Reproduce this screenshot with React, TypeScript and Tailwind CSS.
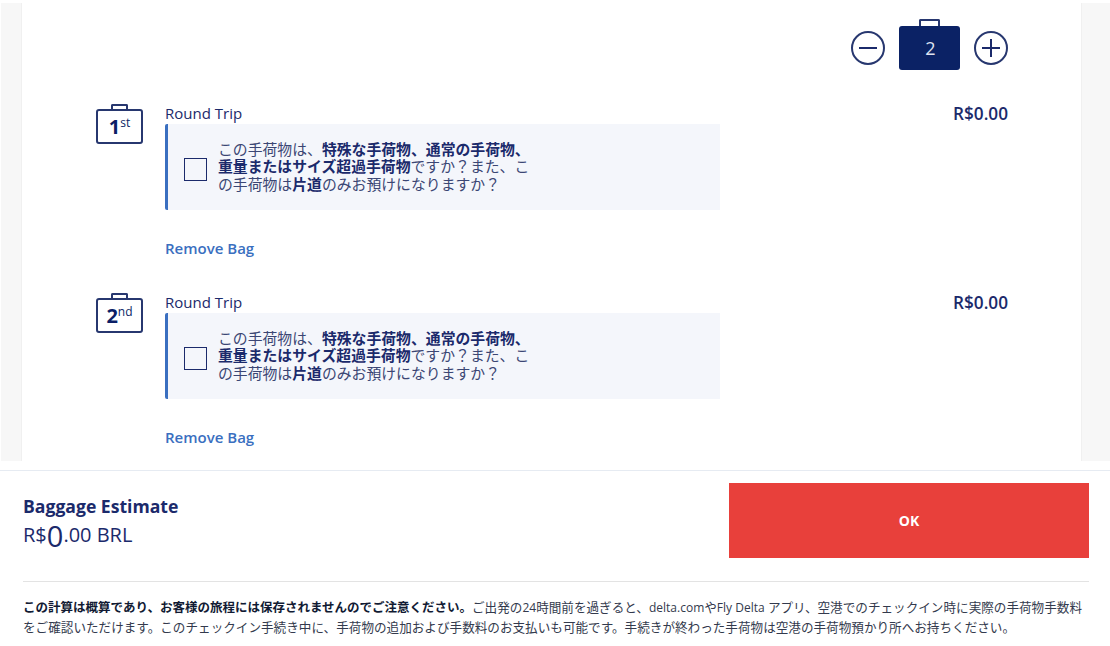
const sans = "font-['Open_Sans','Noto_Sans_CJK_JP',sans-serif]";

const BagOutline = ({ rank, suffix }: { rank: string; suffix: string }) => (
  <div className="relative mt-[6px] flex h-[35px] w-[47px] items-center justify-center rounded-[3px] border-2 border-[#27376f] text-[#0b1f66]">
    <div className="absolute top-[-7px] left-[13px] h-[6px] w-[17px] rounded-t-[2px] border-2 border-b-0 border-[#27376f]" />
    <span className="text-[20px] leading-none font-bold">{rank}</span>
    <span className="mb-[7px] text-[12px] leading-none">{suffix}</span>
  </div>
);

const BagRow = ({ rank, suffix }: { rank: string; suffix: string }) => (
  <div className="flex h-[189px] pr-[73px] pl-[74px]">
    <BagOutline rank={rank} suffix={suffix} />
    <div className="ml-[22px] flex-1">
      <div className="flex h-[21px] items-center justify-between text-[15px] text-[#1b2a6b]">
        <span>Round Trip</span>
        <span className="text-[17.2px] font-semibold">R$0.00</span>
      </div>
      <div className="flex h-[86px] w-[555px] items-center rounded-l-[2px] border-l-[3px] border-[#3a6fc0] bg-[#f4f6fb] pl-[16px]">
        <div className="mt-[4px] h-[23px] w-[23px] shrink-0 border-[1.5px] border-[#1b2a6b]" />
        <p className="ml-[11px] w-[330px] text-[14.85px] leading-[17.5px] text-[#3b4674]">
          この手荷物は、<b className="text-[#1b2a6b]">特殊な手荷物、通常の手荷物、<br />重量またはサイズ超過手荷物</b>ですか？また、こ<br />の手荷物は<b className="text-[#1b2a6b]">片道</b>のみお預けになりますか？
        </p>
      </div>
      <div className="mt-[28px] text-[15px] leading-[20px] font-semibold text-[#3a6fc0]">Remove Bag</div>
    </div>
  </div>
);

export default function App() {
  return (
    <div className={`flex h-[646px] w-[1110px] flex-col overflow-hidden bg-white ${sans}`}>
      <div className="flex h-[461px] shrink-0 pt-[3px] pl-[1px]">
        <div className="w-[21px] border-r border-[#f0f0f0] bg-[#f7f7f7]" />
        <main className="flex-1 overflow-hidden">
          <div className="flex h-[100px] items-start justify-end pt-[16px] pr-[73px]">
            <div className="flex items-center gap-[14px] pt-[7px]">
              <button className="flex h-[34px] w-[34px] items-center justify-center rounded-full border-2 border-[#27376f]">
                <span className="h-[2px] w-[18px] bg-[#1b2a6b]" />
              </button>
              <div className="relative flex h-[44px] w-[61px] items-center justify-center rounded-[3px] bg-[#0b2265] pt-[1px] pl-[2px] text-[18px] text-[#dfe3f0]">
                <div className="absolute top-[-7px] left-[20px] h-[7px] w-[21px] rounded-t-[2px] border-2 border-b-0 border-[#27376f]" />
                2
              </div>
              <button className="relative flex h-[34px] w-[34px] items-center justify-center rounded-full border-2 border-[#27376f]">
                <span className="h-[2px] w-[18px] bg-[#1b2a6b]" />
                <span className="absolute h-[18px] w-[2px] bg-[#1b2a6b]" />
              </button>
            </div>
          </div>
          <BagRow rank="1" suffix="st" />
          <BagRow rank="2" suffix="nd" />
        </main>
        <div className="w-[29px] border-l border-[#f0f0f0] bg-[#f7f7f7]" />
      </div>

      <footer className="mt-[9px] flex-1 border-t border-[#e6ebf2] px-[23px] pt-[12px]">
        <div className="mr-[-2px] flex h-[99px] items-start justify-between border-b border-[#e3e3e3]">
          <div className="pt-[11px] text-[#1b2a6b]">
            <div className="text-[17.6px] leading-[24px] font-bold">Baggage Estimate</div>
            <div className="mt-[3px] text-[20px] leading-[28px]">
              R$<span className="align-[-5px] text-[29px] leading-none">0</span>.00 BRL
            </div>
          </div>
          <button className="flex h-[75px] w-[360px] items-center justify-center bg-[#e8403b] pb-[1px] text-[14px] font-bold text-white">OK</button>
        </div>
        <p className="mt-[16px] whitespace-nowrap text-[12.6px] leading-[20px] text-[#333a4d]">
          <b className="text-[12.5px] text-[#111a33]">この計算は概算であり、お客様の旅程には保存されませんのでご注意ください。</b>ご出発の<span className="text-[12px]">24</span>時間前を過ぎると、<span className="text-[12px]">delta.com</span>や<span className="text-[12px]">Fly Delta</span> アプリ、空港でのチェックイン時に実際の手荷物手数料<br />をご確認いただけます。このチェックイン手続き中に、手荷物の追加および手数料のお支払いも可能です。手続きが終わった手荷物は空港の手荷物預かり所へお持ちください。
        </p>
      </footer>
    </div>
  );
}
